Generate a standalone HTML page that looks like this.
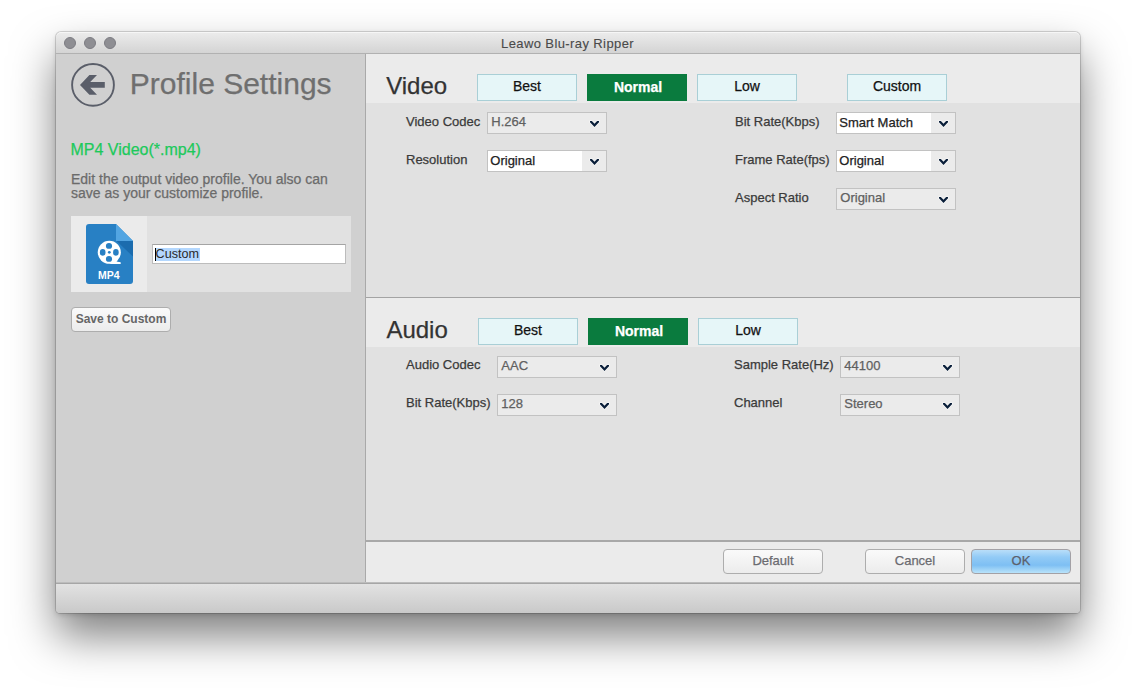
<!DOCTYPE html>
<html><head><meta charset="utf-8"><title>Leawo Blu-ray Ripper</title>
<style>
*{box-sizing:border-box;margin:0;padding:0}
html,body{width:1136px;height:693px;overflow:hidden;background:#fff}
body{font-family:"Liberation Sans",sans-serif;position:relative}
.win{position:absolute;left:56px;top:32px;width:1024px;height:581px;border-radius:5px 5px 4px 4px;
 box-shadow:0 23px 44px rgba(0,0,0,.50),0 0 0 1px rgba(0,0,0,.14),0 2px 5px rgba(0,0,0,.15);background:#d0d0d0;overflow:hidden}
.abs{position:absolute}
.t{position:absolute;white-space:pre;-webkit-text-stroke:.25px}
.qb,.mb,.ok{-webkit-text-stroke:.25px}
.a{position:absolute}
.tb{position:absolute;left:0;top:0;width:1024px;height:22px;background:linear-gradient(#ececec,#d4d4d4);border-bottom:1px solid #b1b1b1;border-radius:5px 5px 0 0;box-shadow:inset 0 1px 0 #f6f6f6}
.dot{position:absolute;top:6px;width:12px;height:12px;border-radius:50%;background:#8e8e93;border:1px solid #7c7c82}
.sel{position:absolute;border:1px solid #c2c2c2;background:#ebebeb}
.sb{position:absolute;right:0;top:0;width:24px;height:100%;background:#ebebeb}
.qb{position:absolute;border:1px solid #a9cfd6;background:#e6f6f8;color:#111;font-size:14px;text-align:center;line-height:23px}
.qb.on{background:#0a7b3e;border-color:#0a7b3e;color:#fff;font-weight:700;padding:1px 0 0 2px}
.mb{position:absolute;border:1px solid #adadad;border-radius:4px;background:linear-gradient(#fafafa,#ececec);color:#6b6b70;text-align:center;line-height:21px}
.ok{position:absolute;border:1px solid #a3a1a6;border-radius:4px;background:linear-gradient(#b9def9 0%,#93cbf6 30%,#7ebff3 66%,#b9e3fa 100%);color:#5c606c;text-align:center;line-height:21px}
</style></head>
<body>
<div class="win"><div class="abs" style="left:-56px;top:-32px;width:1136px;height:693px">
<div class="tb" style="left:56px;top:32px"></div>
<div class="dot" style="left:64px;top:37px"></div>
<div class="dot" style="left:84px;top:37px"></div>
<div class="dot" style="left:104px;top:37px"></div>
<div class="t" style="left:501px;top:37.00px;font-size:13px;line-height:13px;color:#4a4a4a;font-weight:400;letter-spacing:0.4px;-webkit-text-stroke:.12px">Leawo Blu-ray Ripper</div>
<div class="abs" style="left:365px;top:54px;width:1px;height:529px;background:#a9a9a9"></div>
<div class="abs" style="left:366px;top:54px;width:714px;height:529px;background:#e1e1e1"></div>
<div class="abs" style="left:366px;top:54px;width:714px;height:49px;background:#ebebeb"></div>
<div class="abs" style="left:366px;top:297px;width:714px;height:1px;background:#a3a3a3"></div>
<div class="abs" style="left:366px;top:298px;width:714px;height:49px;background:#ebebeb"></div>
<div class="abs" style="left:366px;top:540px;width:714px;height:2px;background:#a8a8a8"></div>
<div class="abs" style="left:366px;top:542px;width:714px;height:41px;background:#ebebeb"></div>
<div class="abs" style="left:56px;top:582px;width:1024px;height:1px;background:#bcbcbc"></div>
<div class="abs" style="left:56px;top:583px;width:1024px;height:1px;background:#a6a6a6"></div>
<div class="abs" style="left:56px;top:584px;width:1024px;height:29px;background:linear-gradient(#e2e2e2,#c9c9c9)"></div>
<svg class="a" style="left:69px;top:61px" width="48" height="48" viewBox="0 0 48 48">
<circle cx="24" cy="23.9" r="20.9" fill="none" stroke="#5a5e69" stroke-width="1.9"/>
<path d="M11 23.9 L20.4 14 L28 14 L21.2 21.1 L35.8 21.1 L35.8 26.7 L21.2 26.7 L28 33.8 L20.4 33.8 Z" fill="#5a5e69"/>
</svg>
<div class="t" style="left:129.8px;top:69.20px;font-size:30px;line-height:30px;color:#6f6f6f;font-weight:400;">Profile Settings</div>
<div class="t" style="left:70.5px;top:142.46px;font-size:16px;line-height:16px;color:#1cc95b;font-weight:400;">MP4 Video(*.mp4)</div>
<div class="t" style="left:71px;top:172.15px;font-size:14px;line-height:14px;color:#6b6b6b;font-weight:400;">Edit the output video profile. You also can</div>
<div class="t" style="left:71px;top:186.15px;font-size:14px;line-height:14px;color:#6b6b6b;font-weight:400;">save as your customize profile.</div>
<div class="abs" style="left:71px;top:216px;width:280px;height:76px;background:#e1e1e1"></div>
<div class="abs" style="left:71px;top:216px;width:76px;height:76px;background:#ebebeb"></div>
<svg class="a" style="left:86px;top:224px" width="47" height="60" viewBox="0 0 47 60">
<path d="M3 0 H30 L47 17 V57 a3 3 0 0 1 -3 3 H3 a3 3 0 0 1 -3 -3 V3 a3 3 0 0 1 3 -3 Z" fill="#2880c4"/>
<path d="M30 0 L47 17 H30 Z" fill="#52a5e2"/>
<path d="M30.5 17 H47 V32.5 Z" fill="#1b6cae"/>
<circle cx="23.3" cy="28.3" r="11.55" fill="#fff"/>
<path d="M23.3 39.9 L34.7 39.9 L34.7 38.3 Q31 38.2 29.3 36.6 Z" fill="#fff"/>
<ellipse cx="23" cy="21.9" rx="3.1" ry="2.9" fill="#2880c4"/>
<ellipse cx="23" cy="34.9" rx="3.1" ry="2.9" fill="#2880c4"/>
<ellipse cx="16.7" cy="28.4" rx="2.8" ry="3.3" fill="#2880c4"/>
<ellipse cx="29.9" cy="28.4" rx="2.8" ry="3.3" fill="#2880c4"/>
<circle cx="23.3" cy="28.3" r="1.4" fill="#2880c4"/>
</svg>
<div class="t" style="left:98px;top:269.51px;font-size:10.5px;line-height:10.5px;color:#fff;font-weight:700;-webkit-text-stroke:0">MP4</div>
<div class="abs" style="left:152px;top:244px;width:194px;height:20px;background:#fff;border:1px solid #bcbcbc;border-top-color:#a4a4a4"></div>
<div class="abs" style="left:156px;top:248px;width:43.5px;height:13px;background:#b3d7fe"></div>
<div class="abs" style="left:155px;top:248px;width:1px;height:13px;background:#000"></div>
<div class="t" style="left:155.6px;top:247.73px;font-size:12.6px;line-height:12.6px;color:#2a2a2a;font-weight:400;-webkit-text-stroke:0">Custom</div>
<div class="mb" style="left:71px;top:307px;width:100px;height:25px;font-size:12px;font-weight:700;line-height:23px;-webkit-text-stroke:0;color:#666">Save to Custom</div>
<div class="t" style="left:386.2px;top:74.28px;font-size:24px;line-height:24px;color:#333;font-weight:400;">Video</div>
<div class="qb" style="left:477px;top:74px;width:100px;height:27px">Best</div>
<div class="qb on" style="left:587px;top:74px;width:100px;height:27px">Normal</div>
<div class="qb" style="left:697px;top:74px;width:100px;height:27px">Low</div>
<div class="qb" style="left:847px;top:74px;width:100px;height:27px">Custom</div>
<div class="t" style="left:406px;top:114.80px;font-size:13px;line-height:13px;color:#3a3a3a;font-weight:400;">Video Codec</div>
<div class="t" style="left:406px;top:152.80px;font-size:13px;line-height:13px;color:#3a3a3a;font-weight:400;">Resolution</div>
<div class="sel" style="left:487px;top:112px;width:120px;height:22px"></div>
<div class="t" style="left:491.3px;top:114.70px;font-size:13px;line-height:13px;color:#606060;font-weight:400;">H.264</div>
<svg class="a" style="left:587.0px;top:118px" width="15" height="12" viewBox="0 0 15 12"><path d="M3 3 L4.9 3 L7.5 5.7 L10.1 3 L12 3 L12 4.3 L7.5 8.9 L3 4.3 Z" fill="none" stroke="#fff" stroke-opacity=".55" stroke-width="1.6" stroke-linejoin="round"/><path d="M3 3 L4.9 3 L7.5 5.7 L10.1 3 L12 3 L12 4.3 L7.5 8.9 L3 4.3 Z" fill="#0a1f3a"/></svg>
<div class="sel" style="left:487px;top:150px;width:120px;height:22px;background:#fff"><div class="sb"></div></div>
<div class="t" style="left:490.3px;top:153.70px;font-size:13px;line-height:13px;color:#222;font-weight:400;">Original</div>
<svg class="a" style="left:587.0px;top:156px" width="15" height="12" viewBox="0 0 15 12"><path d="M3 3 L4.9 3 L7.5 5.7 L10.1 3 L12 3 L12 4.3 L7.5 8.9 L3 4.3 Z" fill="none" stroke="#fff" stroke-opacity=".55" stroke-width="1.6" stroke-linejoin="round"/><path d="M3 3 L4.9 3 L7.5 5.7 L10.1 3 L12 3 L12 4.3 L7.5 8.9 L3 4.3 Z" fill="#0a1f3a"/></svg>
<div class="t" style="left:735px;top:114.80px;font-size:13px;line-height:13px;color:#3a3a3a;font-weight:400;">Bit Rate(Kbps)</div>
<div class="t" style="left:735px;top:152.80px;font-size:13px;line-height:13px;color:#3a3a3a;font-weight:400;">Frame Rate(fps)</div>
<div class="t" style="left:735px;top:190.80px;font-size:13px;line-height:13px;color:#3a3a3a;font-weight:400;">Aspect Ratio</div>
<div class="sel" style="left:836px;top:112px;width:120px;height:22px;background:#fff"><div class="sb"></div></div>
<div class="t" style="left:839.3px;top:115.70px;font-size:13px;line-height:13px;color:#222;font-weight:400;">Smart Match</div>
<svg class="a" style="left:936.0px;top:118px" width="15" height="12" viewBox="0 0 15 12"><path d="M3 3 L4.9 3 L7.5 5.7 L10.1 3 L12 3 L12 4.3 L7.5 8.9 L3 4.3 Z" fill="none" stroke="#fff" stroke-opacity=".55" stroke-width="1.6" stroke-linejoin="round"/><path d="M3 3 L4.9 3 L7.5 5.7 L10.1 3 L12 3 L12 4.3 L7.5 8.9 L3 4.3 Z" fill="#0a1f3a"/></svg>
<div class="sel" style="left:836px;top:150px;width:120px;height:22px;background:#fff"><div class="sb"></div></div>
<div class="t" style="left:839.3px;top:153.70px;font-size:13px;line-height:13px;color:#222;font-weight:400;">Original</div>
<svg class="a" style="left:936.0px;top:156px" width="15" height="12" viewBox="0 0 15 12"><path d="M3 3 L4.9 3 L7.5 5.7 L10.1 3 L12 3 L12 4.3 L7.5 8.9 L3 4.3 Z" fill="none" stroke="#fff" stroke-opacity=".55" stroke-width="1.6" stroke-linejoin="round"/><path d="M3 3 L4.9 3 L7.5 5.7 L10.1 3 L12 3 L12 4.3 L7.5 8.9 L3 4.3 Z" fill="#0a1f3a"/></svg>
<div class="sel" style="left:836px;top:188px;width:120px;height:22px"></div>
<div class="t" style="left:840.3px;top:190.70px;font-size:13px;line-height:13px;color:#606060;font-weight:400;">Original</div>
<svg class="a" style="left:936.0px;top:194px" width="15" height="12" viewBox="0 0 15 12"><path d="M3 3 L4.9 3 L7.5 5.7 L10.1 3 L12 3 L12 4.3 L7.5 8.9 L3 4.3 Z" fill="none" stroke="#fff" stroke-opacity=".55" stroke-width="1.6" stroke-linejoin="round"/><path d="M3 3 L4.9 3 L7.5 5.7 L10.1 3 L12 3 L12 4.3 L7.5 8.9 L3 4.3 Z" fill="#0a1f3a"/></svg>
<div class="t" style="left:386.4px;top:318.28px;font-size:24px;line-height:24px;color:#333;font-weight:400;">Audio</div>
<div class="qb" style="left:478px;top:318px;width:100px;height:27px">Best</div>
<div class="qb on" style="left:588px;top:318px;width:100px;height:27px">Normal</div>
<div class="qb" style="left:698px;top:318px;width:100px;height:27px">Low</div>
<div class="t" style="left:406px;top:358.40px;font-size:13px;line-height:13px;color:#3a3a3a;font-weight:400;">Audio Codec</div>
<div class="t" style="left:406px;top:396.40px;font-size:13px;line-height:13px;color:#3a3a3a;font-weight:400;">Bit Rate(Kbps)</div>
<div class="sel" style="left:497px;top:356px;width:120px;height:22px"></div>
<div class="t" style="left:501.3px;top:358.70px;font-size:13px;line-height:13px;color:#606060;font-weight:400;">AAC</div>
<svg class="a" style="left:597.0px;top:362px" width="15" height="12" viewBox="0 0 15 12"><path d="M3 3 L4.9 3 L7.5 5.7 L10.1 3 L12 3 L12 4.3 L7.5 8.9 L3 4.3 Z" fill="none" stroke="#fff" stroke-opacity=".55" stroke-width="1.6" stroke-linejoin="round"/><path d="M3 3 L4.9 3 L7.5 5.7 L10.1 3 L12 3 L12 4.3 L7.5 8.9 L3 4.3 Z" fill="#0a1f3a"/></svg>
<div class="sel" style="left:497px;top:394px;width:120px;height:22px"></div>
<div class="t" style="left:501.3px;top:396.70px;font-size:13px;line-height:13px;color:#606060;font-weight:400;">128</div>
<svg class="a" style="left:597.0px;top:400px" width="15" height="12" viewBox="0 0 15 12"><path d="M3 3 L4.9 3 L7.5 5.7 L10.1 3 L12 3 L12 4.3 L7.5 8.9 L3 4.3 Z" fill="none" stroke="#fff" stroke-opacity=".55" stroke-width="1.6" stroke-linejoin="round"/><path d="M3 3 L4.9 3 L7.5 5.7 L10.1 3 L12 3 L12 4.3 L7.5 8.9 L3 4.3 Z" fill="#0a1f3a"/></svg>
<div class="t" style="left:734px;top:358.40px;font-size:13px;line-height:13px;color:#3a3a3a;font-weight:400;">Sample Rate(Hz)</div>
<div class="t" style="left:734px;top:396.40px;font-size:13px;line-height:13px;color:#3a3a3a;font-weight:400;">Channel</div>
<div class="sel" style="left:840px;top:356px;width:120px;height:22px"></div>
<div class="t" style="left:844.3px;top:358.70px;font-size:13px;line-height:13px;color:#606060;font-weight:400;">44100</div>
<svg class="a" style="left:940.0px;top:362px" width="15" height="12" viewBox="0 0 15 12"><path d="M3 3 L4.9 3 L7.5 5.7 L10.1 3 L12 3 L12 4.3 L7.5 8.9 L3 4.3 Z" fill="none" stroke="#fff" stroke-opacity=".55" stroke-width="1.6" stroke-linejoin="round"/><path d="M3 3 L4.9 3 L7.5 5.7 L10.1 3 L12 3 L12 4.3 L7.5 8.9 L3 4.3 Z" fill="#0a1f3a"/></svg>
<div class="sel" style="left:840px;top:394px;width:120px;height:22px"></div>
<div class="t" style="left:844.3px;top:396.70px;font-size:13px;line-height:13px;color:#606060;font-weight:400;">Stereo</div>
<svg class="a" style="left:940.0px;top:400px" width="15" height="12" viewBox="0 0 15 12"><path d="M3 3 L4.9 3 L7.5 5.7 L10.1 3 L12 3 L12 4.3 L7.5 8.9 L3 4.3 Z" fill="none" stroke="#fff" stroke-opacity=".55" stroke-width="1.6" stroke-linejoin="round"/><path d="M3 3 L4.9 3 L7.5 5.7 L10.1 3 L12 3 L12 4.3 L7.5 8.9 L3 4.3 Z" fill="#0a1f3a"/></svg>
<div class="mb" style="left:723px;top:549px;width:100px;height:25px;font-size:13px;font-weight:400;line-height:21px;">Default</div>
<div class="mb" style="left:865px;top:549px;width:100px;height:25px;font-size:13px;font-weight:400;line-height:21px;">Cancel</div>
<div class="ok" style="left:971px;top:549px;width:100px;height:25px;font-size:13px;font-weight:400;line-height:21px;">OK</div>
</div></div>
</body></html>
